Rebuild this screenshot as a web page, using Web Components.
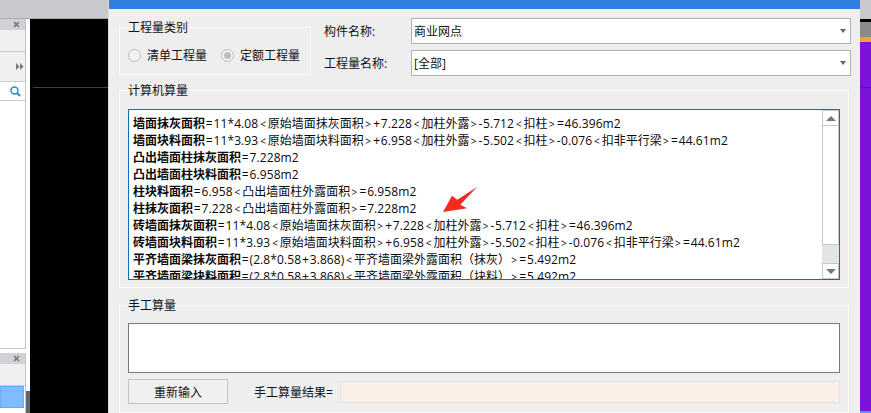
<!DOCTYPE html>
<html><head><meta charset="utf-8"><style>
html,body{margin:0;padding:0;background:#000;overflow:hidden}
body{width:871px;height:413px}
</style></head><body>
<app-screen>
<side-panel slot="left"></side-panel>
<canvas-view slot="mid"></canvas-view>
<qty-dialog slot="dialog"></qty-dialog>
<right-strip slot="right"></right-strip>
</app-screen>
<script>
const F='"Open Sans","Noto Sans CJK SC",sans-serif';
function def(name,html){customElements.define(name,class extends HTMLElement{constructor(){super();this.attachShadow({mode:'open'}).innerHTML=html}})}
const X=`<svg width="7" height="7" viewBox="0 0 7 7"><path d="M1 1l5 5M6 1L1 6" stroke="#777" stroke-width="1.6"/></svg>`;
def('app-screen',`<style>:host{display:grid;grid-template-columns:30px 78px 752px 11px;width:871px;height:413px;overflow:hidden;font-family:${F}}</style>
<slot name="left"></slot><slot name="mid"></slot><slot name="dialog"></slot><slot name="right"></slot>`);
def('side-panel',`<style>
:host{display:flex;flex-direction:column;height:413px;background:#fff;position:relative}
.top{height:18px;flex:none;background:#c8cacf;border-bottom:1px solid #a8a8a8}
.p{width:25px;background:#fff;border-right:1px solid #c4c4c4;display:flex;flex-direction:column;flex:none}
.a{height:329px;border-bottom:1px solid #c4c4c4}
.h{height:11px;flex:none;background:#d0d2d6;display:flex;justify-content:flex-end;align-items:center;padding-right:5px}
.r1{height:21px;flex:none;background:#f0f0f0;border-bottom:1px solid #ccc}
.r2{height:29px;flex:none;background:#f0f0f0;border-bottom:1px solid #ccc;display:flex;justify-content:flex-end;align-items:center;padding-right:0}
.r3{height:18px;flex:none;border-bottom:1px solid #ccc;display:flex;justify-content:flex-end;align-items:center;padding-right:6px}
.r2 svg{margin-right:1px}
.r3 svg{margin-right:-2px}
.b{height:61px;margin-top:4px;flex:none}
.r4{height:21px;flex:none;background:#f0f0f0;border-bottom:1px solid #ccc}
.sel{height:20px;width:22px;box-sizing:content-box;background:#80bbfb;border:1px solid #66aef5;flex:none}
.dk{position:absolute;left:26px;top:391px;width:4px;height:22px;background:#5f6670}
</style>
<div class="top"></div>
<div class="p a"><div class="h">${X}</div><div class="r1"></div>
<div class="r2"><svg width="8" height="7" viewBox="0 0 8 7"><path d="M0 0l3.5 3.5L0 7zM4 0l3.5 3.5L4 7z" fill="#777"/></svg></div>
<div class="r3"><svg width="11" height="11" viewBox="0 0 11 11"><circle cx="4.5" cy="4.5" r="3.5" fill="none" stroke="#3287c4" stroke-width="1.4"/><path d="M7 7l3 3" stroke="#3287c4" stroke-width="2"/></svg></div></div>
<div class="p b"><div class="h">${X}</div><div class="r4"></div><div class="sel"></div></div><div class="dk"></div>`);
def('canvas-view',`<style>:host{display:block;height:413px;background:#000;position:relative}
.t{height:18px;background:#c8cacf;border-bottom:1px solid #a8a8a8}
.l{position:absolute;left:3px;right:0;top:87px;height:1px;background:#0a6a0a}</style><div class="t"></div><div class="l"></div>`);
def('right-strip',`<style>:host{display:flex;flex-direction:column;height:413px;background:#7b14d8}
.a{height:19px;background:#c8cacf}.k{height:3px;background:#000}.g{height:15px;background:#8a8a8a}.o{height:5px;background:#f6a233}
.m{flex:1}.ln{height:1px;background:#0a5c0a;margin-top:45px}.bt{height:2px;background:#5c8ff0}
</style><div class="a"></div><div class="k"></div><div class="g"></div><div class="o"></div><div class="ln"></div><div class="m"></div><div class="bt"></div>`);
def('group-box',`<style>:host{display:block;box-sizing:border-box;border:1px solid #fafafa;position:relative;flex:none}
.t{position:absolute;left:7px;top:-9px;font-size:12px;line-height:17px;background:#eee;padding:0 1px;color:#111}</style>
<div class="t"><slot name="title"></slot></div><slot></slot>`);
def('radio-opt',`<style>:host{display:inline-flex;align-items:center;gap:6px;font-size:12px;color:#111}
i{width:11px;height:11px;border-radius:50%;border:1px solid #bbb;background:#f2f2f2;display:grid;place-items:center}
:host([on]) i::after{content:"";width:7px;height:7px;border-radius:50%;background:#bdbdbd}</style><i></i><slot></slot>`);
def('combo-box',`<style>:host{display:flex;align-items:center;box-sizing:border-box;height:26px;width:440px;border:1px solid #b0b0b0;background:#fff;font-size:12px;padding:0 2px;color:#111;justify-content:space-between}
b{width:0;height:0;border:3.5px solid transparent;border-top:4px solid #666;border-bottom:0;margin-right:2px}</style><span><slot></slot></span><b></b>`);
def('calc-list',`<style>:host{display:flex;box-sizing:border-box;width:712px;height:171px;border:1px solid #0f6fbd;background:#fff}
.c{flex:1;overflow:hidden;padding:5px 0 0 4px;font-size:12px;line-height:17px;color:#0a0a0a;white-space:nowrap;position:relative}
.sb{width:17px;flex:none;display:flex;flex-direction:column;background:#fff}
.btn{height:16px;flex:none;border:1px solid #c8c8c8;box-sizing:border-box;display:grid;place-items:center;background:#fff}
.tr{flex:1;border-left:1px solid #c8c8c8;border-right:1px solid #c8c8c8;background:#fff}
.rest{height:18px;flex:none;background:#e4e4e4;border-top:1px solid #c8c8c8}
.up{border:5px solid transparent;border-bottom:5px solid #777;border-top:0;width:0}
.dn{border:5px solid transparent;border-top:5px solid #777;border-bottom:0;width:0}
svg{position:absolute;left:314px;top:77px}
</style><div class="c"><slot></slot>
<svg width="35" height="26" viewBox="0 0 35 26"><path d="M34 0L14.3 12.7 9 8.7 0 25 24 21.3 17.3 17.7z" fill="#f52a1f"/></svg></div>
<div class="sb"><div class="btn"><div class="up"></div></div><div class="tr"></div><div class="rest"></div><div class="btn"><div class="dn"></div></div></div>`);
def('calc-line',`<style>:host{display:block;height:17px}b{font-weight:700}</style><b><slot name="k"></slot></b><slot></slot>`);
def('push-btn',`<style>:host{display:grid;place-items:center;box-sizing:border-box;width:100px;height:25px;border:1px solid #c4c4c4;background:#f0f0f0;font-size:12px;color:#111}</style><slot></slot>`);
const L=[['墙面抹灰面积','=11*4.08<原始墙面抹灰面积>+7.228<加柱外露>-5.712<扣柱>=46.396m2'],
['墙面块料面积','=11*3.93<原始墙面块料面积>+6.958<加柱外露>-5.502<扣柱>-0.076<扣非平行梁>=44.61m2'],
['凸出墙面柱抹灰面积','=7.228m2'],['凸出墙面柱块料面积','=6.958m2'],
['柱块料面积','=6.958<凸出墙面柱外露面积>=6.958m2'],['柱抹灰面积','=7.228<凸出墙面柱外露面积>=7.228m2'],
['砖墙面抹灰面积','=11*4.08<原始墙面抹灰面积>+7.228<加柱外露>-5.712<扣柱>=46.396m2'],
['砖墙面块料面积','=11*3.93<原始墙面块料面积>+6.958<加柱外露>-5.502<扣柱>-0.076<扣非平行梁>=44.61m2'],
['平齐墙面梁抹灰面积','=(2.8*0.58+3.868)<平齐墙面梁外露面积（抹灰）>=5.492m2'],
['平齐墙面梁块料面积','=(2.8*0.58+3.868)<平齐墙面梁外露面积（块料）>=5.492m2']];
const cls={'<':'lt','>':'gt','=':'op','+':'op','-':'mi'},ent={'<':'&lt;','>':'&gt;'};
const fmt=v=>v.replace(/[<>=+\-]|[0-9.*m()]+/g,m=>cls[m]?`<span class="o ${cls[m]}">${ent[m]||m}</span>`:`<span class="n">${m}</span>`);
const lines=L.map(([k,v])=>`<calc-line><span slot="k">${k}</span>${fmt(v)}</calc-line>`).join('');
def('qty-dialog',`<style>
:host{display:flex;flex-direction:column;height:413px;background:#eee;border-left:1px solid #dcdce0;box-sizing:border-box;font-size:12px;color:#111}
.title{height:9px;background:#2e7fe0;flex:none}
.top{display:flex;margin:18px 0 0 10px;height:49px;flex:none}
.kind{width:192px;height:48px;display:flex;align-items:center;gap:14px;padding:8px 0 0 8px}
.fields{display:grid;grid-template-columns:87px 440px;row-gap:6px;margin:-9px 0 0 13px;align-items:center;align-content:start}
.calc{margin:14px 0 0 10px;width:730px;height:198px;padding:18px 0 0 8px}
.man{margin:17px 0 0 10px;width:730px;height:108px;padding:17px 0 0 8px}
.ta{box-sizing:border-box;width:712px;height:50px;background:#fff;border:1px solid #7a7a7a}
.row{display:flex;align-items:center;margin-top:6px}
.lab{margin-left:26px;white-space:nowrap;width:86px}
.res{width:500px;height:22px;box-sizing:border-box;background:#f9efe6;border:1px solid #e4e0dc}
.o{display:inline-block;text-align:center;line-height:0}
.lt{width:9.5px;font-size:10px}.gt{width:8.5px;font-size:10px}.op{width:8.5px}.mi{width:5px}
.n{letter-spacing:.1px}
</style>
<div class="title"></div>
<div class="top"><group-box class="kind"><span slot="title">工程量类别</span><radio-opt>清单工程量</radio-opt><radio-opt on>定额工程量</radio-opt></group-box>
<div class="fields"><span>构件名称:</span><combo-box>商业网点</combo-box><span>工程量名称:</span><combo-box>[全部]</combo-box></div></div>
<group-box class="calc"><span slot="title">计算机算量</span><calc-list>${lines}</calc-list></group-box>
<group-box class="man"><span slot="title">手工算量</span><div class="ta"></div>
<div class="row"><push-btn>重新输入</push-btn><span class="lab">手工算量结果=</span><div class="res"></div></div></group-box>`);
</script>
</body></html>
